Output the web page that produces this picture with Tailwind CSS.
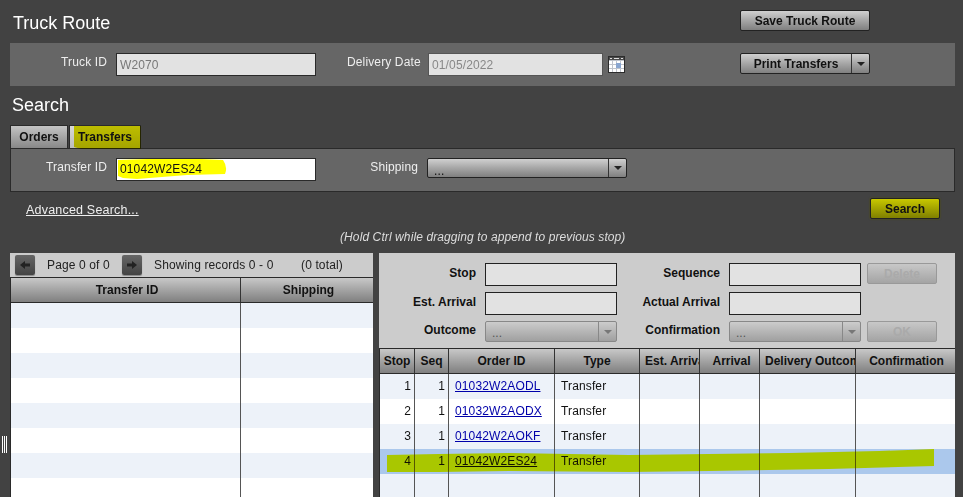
<!DOCTYPE html>
<html lang="en">
<head>
    <meta charset="UTF-8">
    <title>Truck Route</title>
    <script src="https://cdn.jsdelivr.net/npm/@tailwindcss/browser@4"></script>
</head>
<body class="bg-[#424242] font-['Liberation_Sans',Arial,sans-serif] text-[12px] tracking-[0.13px] text-white">
<div class="relative h-[497px] w-[963px] overflow-hidden">

    <!-- Header -->
    <div class="flex h-[43px] items-start pl-[13px]">
        <h1 class="mt-[13px] w-[727px] text-[18px] leading-[20px] tracking-normal">Truck Route</h1>
        <button class="mt-[10px] h-[21px] w-[130px] rounded-[2px] border border-[#222] bg-linear-to-b from-[#d0d0d0] via-[#a6a6a6] to-[#808080] font-bold tracking-normal text-[#111]">Save Truck Route</button>
    </div>

    <!-- Truck details -->
    <div class="mx-[10px] flex h-[43px] w-[945px] items-start bg-[#666] pt-[10px]">
        <label class="w-[97px] pt-[2px] text-right leading-[15px] text-[#eee]">Truck ID</label>
        <input disabled value="W2070" class="ml-[9px] h-[23px] w-[200px] border border-[#2a2a2a] bg-[#e2e2e2] px-[3px] pt-[1px] text-[#777]">
        <label class="ml-[31px] w-[72px] whitespace-nowrap pt-[2px] leading-[15px] text-[#eee]">Delivery Date</label>
        <input disabled value="01/05/2022" class="ml-[9px] h-[23px] w-[175px] border border-[#555] bg-[#e2e2e2] px-[3px] pt-[1px] text-[#888]">
        <svg class="ml-[5px] mt-[3px] h-[17px] w-[17px]" viewBox="0 0 17 17">
            <rect x=".5" y=".5" width="16" height="16" fill="#fff" stroke="#2b2b2b"/>
            <rect x="1" y="1" width="15" height="3" fill="#4a4a4a"/>
            <path d="M2 2.500h2M6 2.500h5M13 2.500h2" stroke="#ddd"/>
            <path d="M1 4.500h15M1 8.500h15M1 12.500h15M4.500 5v11M8.500 5v11M12.500 5v11" stroke="#c0c4cc"/>
            <rect x="8" y="7" width="5" height="5" fill="#8aa6d0"/>
        </svg>
        <div class="ml-[115px] flex h-[21px] w-[130px] overflow-hidden rounded-[2px] border border-[#222] bg-linear-to-b from-[#d0d0d0] via-[#a6a6a6] to-[#808080] font-bold tracking-normal text-[#111]">
            <button class="w-[111px] border-r border-[#333]">Print Transfers</button>
            <span class="flex flex-1 items-center justify-center"><span class="h-0 w-0 border-x-[4px] border-t-[4px] border-x-transparent border-t-[#222]"></span></span>
        </div>
    </div>

    <!-- Search -->
    <h2 class="ml-[12px] mt-[9px] h-[30px] text-[18px] leading-[20px] tracking-normal">Search</h2>
    <div class="ml-[10px] flex h-[23px] items-stretch font-bold tracking-normal">
        <div class="flex w-[58px] items-center justify-center border border-b-0 border-[#2a2a2a] bg-linear-to-b from-[#c4c4c4] to-[#888] text-[#111]">Orders</div>
        <div class="relative ml-px flex w-[72px] items-center justify-center border border-b-0 border-[#2a2a2a] bg-linear-to-b from-[#d8d8d8] to-[#bcbcbc] text-[#111]">
            <svg class="absolute left-[3px] top-0 h-[23px] w-[68px] mix-blend-multiply" viewBox="0 0 68 23"><path d="M1 0H68V23H8L1 21Z" fill="#e0e000"/></svg>
            <span class="relative">Transfers</span>
        </div>
    </div>
    <div class="mx-[10px] flex h-[44px] w-[945px] items-start border border-[#2a2a2a] bg-[#666] pt-[9px]">
        <label class="w-[96px] pt-[2px] text-right leading-[15px] text-[#eee]">Transfer ID</label>
        <div class="relative ml-[9px] h-[23px] w-[200px] border border-[#2a2a2a] bg-white">
            <svg class="absolute left-0 top-[-1px] h-[23px] w-[110px]" viewBox="0 0 110 23"><path d="M1 2L30 1H85L106 2Q111 9 108 16L70 17L20 21L6 20L1 18Z" fill="#ffff00"/></svg>
            <span class="absolute left-[3px] top-[3px] leading-[15px] text-[#111]">01042W2ES24</span>
        </div>
        <label class="ml-[53px] w-[49px] whitespace-nowrap pt-[2px] text-right leading-[15px] text-[#eee]">Shipping</label>
        <div class="ml-[9px] flex h-[20px] w-[200px] overflow-hidden rounded-[2px] border border-[#222] bg-linear-to-b from-[#d0d0d0] via-[#a6a6a6] to-[#808080] text-[#111]">
            <span class="flex-1 border-r border-[#333] px-[6px] pt-[5px] leading-[14px]">...</span>
            <span class="flex w-[17px] items-center justify-center"><span class="h-0 w-0 border-x-[4px] border-t-[4px] border-x-transparent border-t-[#222]"></span></span>
        </div>
    </div>
    <div class="flex h-[27px] items-start">
        <a class="ml-[26px] mt-[11px] w-[844px] text-[12.5px] leading-[15px] tracking-[0.2px] text-[#eee] underline">Advanced Search...</a>
        <button class="mt-[6px] h-[21px] w-[70px] rounded-[2px] border border-[#222] bg-linear-to-b from-[#c8c800] to-[#808000] font-bold tracking-normal text-[#111] shadow-[0_0_2px_#555500]">Search</button>
    </div>
    <p class="ml-[340px] mt-[11px] h-[23px] italic leading-[15px] tracking-[0.1px] text-[#ddd]">(Hold Ctrl while dragging to append to previous stop)</p>

    <!-- Lists -->
    <div class="ml-[10px] flex h-[244px] gap-[6px]">
        <div class="w-[363px] bg-white text-[#111]">
            <div class="flex h-[24px] items-center bg-[#ccc] pl-[5px] text-[#222]">
                <span class="flex h-[20px] w-[20px] items-center justify-center rounded-[2px] bg-linear-to-b from-[#666] to-[#444] shadow-[0_1px_1px_#888]"><svg width="12" height="10" viewBox="0 0 12 10"><path d="M1 5l5-4v2.500h5v3H6V9z" fill="#222"/></svg></span>
                <span class="ml-[12px] w-[75px]">Page 0 of 0</span>
                <span class="flex h-[20px] w-[20px] items-center justify-center rounded-[2px] bg-linear-to-b from-[#666] to-[#444] shadow-[0_1px_1px_#888]"><svg width="12" height="10" viewBox="0 0 12 10"><path d="M11 5L6 1v2.500H1v3h5V9z" fill="#222"/></svg></span>
                <span class="ml-[12px] w-[147px]">Showing records 0 - 0</span>
                <span>(0 total)</span>
            </div>
            <div class="grid h-[26px] grid-cols-[230px_1fr] border-y border-l border-[#2a2a2a] bg-linear-to-b from-[#c8c8c8] to-[#808080] text-center font-bold leading-[24px] tracking-normal">
                <div class="border-r border-[#333] pl-[3px]">Transfer ID</div>
                <div class="pl-[3px]">Shipping</div>
            </div>
            <div class="grid grid-cols-[230px_1fr] border-l border-[#2a2a2a]">
                <div class="col-span-2 grid h-[25px] grid-cols-subgrid bg-[#edf2f9]"><div class="border-r border-[#555]"></div></div>
                <div class="col-span-2 grid h-[25px] grid-cols-subgrid"><div class="border-r border-[#555]"></div></div>
                <div class="col-span-2 grid h-[25px] grid-cols-subgrid bg-[#edf2f9]"><div class="border-r border-[#555]"></div></div>
                <div class="col-span-2 grid h-[25px] grid-cols-subgrid"><div class="border-r border-[#555]"></div></div>
                <div class="col-span-2 grid h-[25px] grid-cols-subgrid bg-[#edf2f9]"><div class="border-r border-[#555]"></div></div>
                <div class="col-span-2 grid h-[25px] grid-cols-subgrid"><div class="border-r border-[#555]"></div></div>
                <div class="col-span-2 grid h-[25px] grid-cols-subgrid bg-[#edf2f9]"><div class="border-r border-[#555]"></div></div>
                <div class="col-span-2 grid h-[25px] grid-cols-subgrid"><div class="border-r border-[#555]"></div></div>
            </div>
        </div>

        <div class="relative w-[576px] text-[#111]">
            <div class="h-[95px] bg-[#ccc] font-bold tracking-normal">
                <div class="flex h-[32px] items-start pt-[10px]">
                    <label class="w-[97px] pt-[3px] text-right leading-[15px]">Stop</label>
                    <input disabled class="ml-[9px] h-[23px] w-[132px] border border-[#222] bg-[#e2e2e2]">
                    <label class="w-[103px] pt-[3px] text-right leading-[15px]">Sequence</label>
                    <input disabled class="ml-[9px] h-[23px] w-[132px] border border-[#222] bg-[#e2e2e2]">
                    <button disabled class="ml-[6px] h-[21px] w-[70px] rounded-[2px] border border-[#999] bg-linear-to-b from-[#c8c8c8] to-[#a4a4a4] text-[#aaa]">Delete</button>
                </div>
                <div class="flex h-[33px] items-start pt-[7px]">
                    <label class="w-[97px] pt-[3px] text-right leading-[15px]">Est. Arrival</label>
                    <input disabled class="ml-[9px] h-[23px] w-[132px] border border-[#222] bg-[#e2e2e2]">
                    <label class="w-[103px] pt-[3px] text-right leading-[15px]">Actual Arrival</label>
                    <input disabled class="ml-[9px] h-[23px] w-[132px] border border-[#222] bg-[#e2e2e2]">
                </div>
                <div class="flex h-[30px] items-start pt-[3px]">
                    <label class="w-[97px] pt-[2px] text-right leading-[15px]">Outcome</label>
                    <div class="ml-[9px] flex h-[21px] w-[132px] overflow-hidden rounded-[2px] border border-[#888] bg-linear-to-b from-[#ccc] to-[#a0a0a0] font-normal text-[#555]">
                        <span class="flex-1 border-r border-[#888] px-[6px] pt-[4px] leading-[14px]">...</span>
                        <span class="flex w-[17px] items-center justify-center"><span class="h-0 w-0 border-x-[4px] border-t-[4px] border-x-transparent border-t-[#777]"></span></span>
                    </div>
                    <label class="w-[103px] pt-[2px] text-right leading-[15px]">Confirmation</label>
                    <div class="ml-[9px] flex h-[21px] w-[132px] overflow-hidden rounded-[2px] border border-[#888] bg-linear-to-b from-[#ccc] to-[#a0a0a0] font-normal text-[#555]">
                        <span class="flex-1 border-r border-[#888] px-[6px] pt-[4px] leading-[14px]">...</span>
                        <span class="flex w-[17px] items-center justify-center"><span class="h-0 w-0 border-x-[4px] border-t-[4px] border-x-transparent border-t-[#777]"></span></span>
                    </div>
                    <button disabled class="ml-[6px] h-[21px] w-[70px] rounded-[2px] border border-[#999] bg-linear-to-b from-[#c8c8c8] to-[#a4a4a4] text-[#aaa]">OK</button>
                </div>
            </div>
            <div class="grid h-[26px] grid-cols-[35px_34px_106px_85px_60px_60px_96px_1fr] border-y border-l border-[#2a2a2a] bg-linear-to-b from-[#c8c8c8] to-[#808080] text-center font-bold leading-[24px] tracking-normal whitespace-nowrap">
                <div class="overflow-hidden border-r border-[#333]">Stop</div>
                <div class="overflow-hidden border-r border-[#333]">Seq</div>
                <div class="overflow-hidden border-r border-[#333]">Order ID</div>
                <div class="overflow-hidden border-r border-[#333]">Type</div>
                <div class="overflow-hidden border-r border-[#333] pl-[5px] text-left">Est. Arrival</div>
                <div class="overflow-hidden border-r border-[#333] pl-[4px]">Arrival</div>
                <div class="overflow-hidden border-r border-[#333] pl-[5px] text-left">Delivery Outcome</div>
                <div class="overflow-hidden pl-[2px]">Confirmation</div>
            </div>
            <div class="grid grid-cols-[35px_34px_106px_85px_60px_60px_96px_1fr] border-l border-[#2a2a2a] [&>div]:h-[25px] [&>div]:border-r [&>div]:border-[#555] [&>div]:leading-[24px] [&>div:nth-child(8n)]:border-r-0">
                <div class="bg-[#edf2f9] pr-[3px] text-right">1</div><div class="bg-[#edf2f9] pr-[3px] text-right">1</div><div class="bg-[#edf2f9] pl-[6px]"><a class="text-[#00a] underline">01032W2AODL</a></div><div class="bg-[#edf2f9] pl-[6px]">Transfer</div><div class="bg-[#edf2f9]"></div><div class="bg-[#edf2f9]"></div><div class="bg-[#edf2f9]"></div><div class="bg-[#edf2f9]"></div>
                <div class="bg-white pr-[3px] text-right">2</div><div class="bg-white pr-[3px] text-right">1</div><div class="bg-white pl-[6px]"><a class="text-[#00a] underline">01032W2AODX</a></div><div class="bg-white pl-[6px]">Transfer</div><div class="bg-white"></div><div class="bg-white"></div><div class="bg-white"></div><div class="bg-white"></div>
                <div class="bg-[#edf2f9] pr-[3px] text-right">3</div><div class="bg-[#edf2f9] pr-[3px] text-right">1</div><div class="bg-[#edf2f9] pl-[6px]"><a class="text-[#00a] underline">01042W2AOKF</a></div><div class="bg-[#edf2f9] pl-[6px]">Transfer</div><div class="bg-[#edf2f9]"></div><div class="bg-[#edf2f9]"></div><div class="bg-[#edf2f9]"></div><div class="bg-[#edf2f9]"></div>
                <div class="bg-[#abc8ec] pr-[3px] text-right">4</div><div class="bg-[#abc8ec] pr-[3px] text-right">1</div><div class="bg-[#abc8ec] pl-[6px]"><a class="underline">01042W2ES24</a></div><div class="bg-[#abc8ec] pl-[6px]">Transfer</div><div class="bg-[#abc8ec]"></div><div class="bg-[#abc8ec]"></div><div class="bg-[#abc8ec]"></div><div class="bg-[#abc8ec]"></div>
                <div class="bg-[#edf2f9]"></div><div class="bg-[#edf2f9]"></div><div class="bg-[#edf2f9]"></div><div class="bg-[#edf2f9]"></div><div class="bg-[#edf2f9]"></div><div class="bg-[#edf2f9]"></div><div class="bg-[#edf2f9]"></div><div class="bg-[#edf2f9]"></div>
            </div>
            <!-- Highlighter stroke over the selected row -->
            <svg class="absolute left-0 top-[195px] h-[30px] w-[576px] mix-blend-darken" viewBox="0 0 576 30"><path d="M8 7L60 6L130 5L250 7L330 6L410 5L500 3L555 1V18L450 21L330 23L250 24L130 23L60 24L8 24Z" fill="#a9c700"/></svg>
        </div>
    </div>

    <!-- Splitter handle -->
    <div class="absolute left-[2px] top-[436px] flex h-[17px] gap-px">
        <span class="w-px bg-white"></span><span class="w-px bg-white"></span><span class="w-px bg-white"></span>
    </div>
</div>
</body>
</html>
